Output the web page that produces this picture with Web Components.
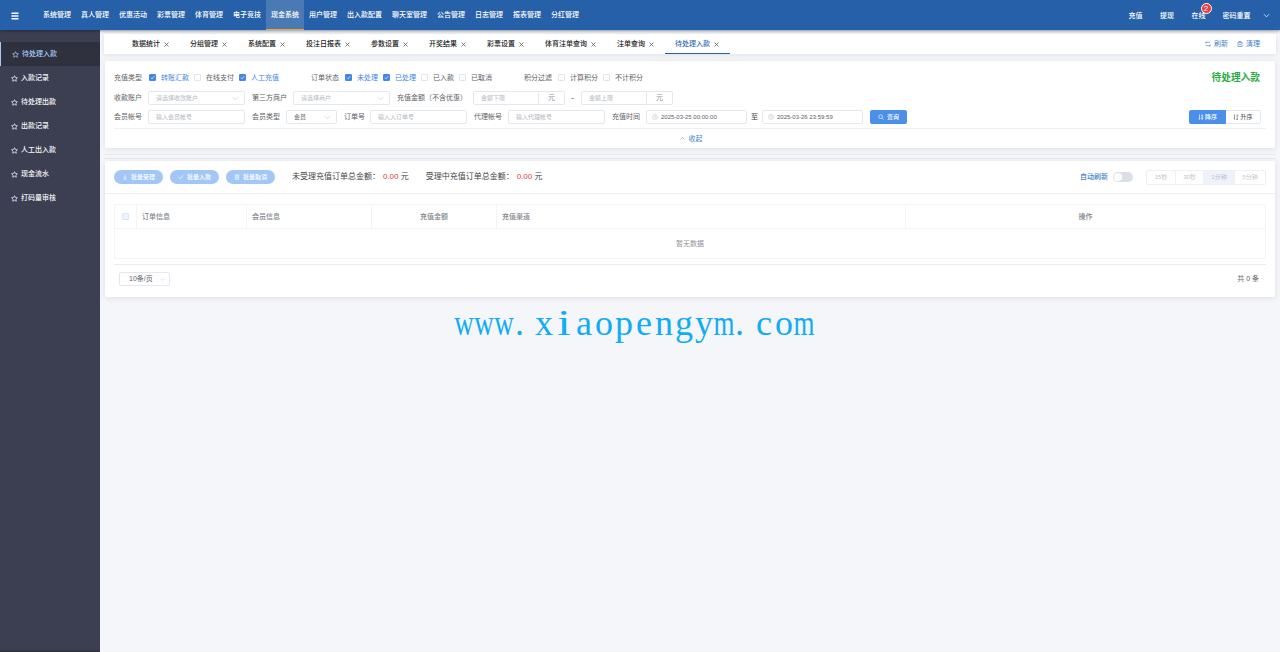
<!DOCTYPE html>
<html lang="zh-CN">
<head>
<meta charset="utf-8">
<title>待处理入款</title>
<style>
  html, body { margin: 0; height: 100%; }
  body {
    font-family: "Liberation Sans", "Noto Sans CJK SC", sans-serif;
    font-size: 7px;
    line-height: 10px;
    color: #606266;
    background: #f4f6fa;
    overflow: hidden;
  }
</style>
</head>
<body>
<admin-app></admin-app>

<script>
// ---------- icons ----------
const icons = {
  menu: '<path d="M1 2.500h14M1 8h14M1 13.500h14" stroke-width="2.600"/>',
  star: '<path d="M8 1.500l2 4.300 4.600.6-3.400 3.200.9 4.700L8 12l-4.100 2.300.9-4.700L1.400 6.400l4.600-.6z"/>',
  down: '<path d="M2 5l6 6 6-6"/>',
  up: '<path d="M2 11l6-6 6 6"/>',
  close: '<path d="M1.500 1.500l13 13M14.500 1.500l-13 13"/>',
  refresh: '<path d="M2 7V3.500h9.500a2 2 0 0 1 2 2M14 9v3.500H4.500a2 2 0 0 1-2-2M4 1.500l-2 2M12 14.500l2-2"/>',
  clear: '<path d="M2.500 3.500h11v11h-11zM5.500 3.500v-2h5v2M6 7l4 4M10 7l-4 4"/>',
  search: '<circle cx="7" cy="7" r="5"/><path d="M11 11l4 4"/>',
  clock: '<circle cx="8" cy="8" r="6.500"/><path d="M8 4v4.500h3"/>',
  check: '<path d="M2.500 8.500l4 4 7.500-9"/>',
  download: '<path d="M8 2v9M5 8.500l3 3 3-3M4 14h8"/>',
  trash: '<path d="M2 3.500h12M3.500 3.500v11h9v-11M6.500 6.500v5M9.500 6.500v5M6 1.500h4"/>',
  sortDesc: '<path d="M4 1v13.500M1.500 12L4 14.500 6.500 12M11 15V2M9 3.500h4M9 8h5M9 13h5"/>',
  sortAsc: '<path d="M4 1v13.500M1.500 12L4 14.500M11 15V1.500L13.500 4M8.500 14.500h5"/>'
};

// Small base class: subclasses only return their markup
class BaseElement extends HTMLElement {
  constructor() {
    super();
    this.attachShadow({ mode: "open" });
  }

  connectedCallback() {
    this.shadowRoot.innerHTML = this.render();
  }

  attr(name, fallback = "") {
    return this.getAttribute(name) || fallback;
  }
}

class UiIcon extends BaseElement {
  render() {
    return `
      <style>
        :host { display: inline-flex; flex: none; width: var(--size, 7px); height: var(--size, 7px); }
        svg { width: 100%; height: 100%; }
      </style>
      <svg viewBox="0 0 16 16" fill="none" stroke="currentColor" stroke-width="${this.attr("weight", "1.7")}">${icons[this.attr("name")]}</svg>`;
  }
}
customElements.define("ui-icon", UiIcon);

// ---------- header ----------
class NavItem extends BaseElement {
  render() {
    return `
      <style>
        :host { display: flex; align-items: center; padding: 0 5px; height: 30px; box-sizing: border-box; white-space: nowrap; font-weight: 500; }
        :host([active]) { background: #4a7ab4; border-bottom: 1px solid #eda43c; padding-top: 1px; }
      </style>
      <slot></slot>`;
  }
}
customElements.define("nav-item", NavItem);

class AppHeader extends BaseElement {
  render() {
    const menus = ["系统管理", "真人管理", "优惠活动", "彩票管理", "体育管理", "电子竞技", "现金系统",
      "用户管理", "出入款配置", "聊天室管理", "公告管理", "日志管理", "报表管理", "分红管理"];
    return `
      <style>
        :host { display: flex; align-items: center; height: 30px; background: #2560a8; color: #fff; box-shadow: 0 1px 3px rgba(0, 21, 41, .45); position: relative; z-index: 2; }
        .burger { display: flex; --size: 8px; padding: 1px 0 0 11px; width: 38px; box-sizing: border-box; }
        nav { display: flex; flex: 1; }
        .tools { display: flex; align-items: center; padding-right: 10px; padding-top: 1px; font-weight: 500; }
        .tools span { margin-right: 17.500px; }
        .tools .online { position: relative; margin-right: 17px; }
        .tools .reset { margin-right: 12.500px; }
        .badge { position: absolute; left: 9px; top: -8px; width: 11px; height: 11px; margin: 0; border: .5px solid #fff; box-sizing: border-box; border-radius: 50%; background: #ef3b3b; font: 8px/10px "Liberation Sans", sans-serif; text-align: center; }
      </style>
      <div class="burger"><ui-icon name="menu"></ui-icon></div>
      <nav>${menus.map(m => `<nav-item ${m === "现金系统" ? "active" : ""}>${m}</nav-item>`).join("")}</nav>
      <div class="tools">
        <span>充值</span><span>提现</span>
        <span class="online">在线<b class="badge">2</b></span>
        <span class="reset">密码重置</span>
        <ui-icon name="down"></ui-icon>
      </div>`;
  }
}
customElements.define("app-header", AppHeader);

// ---------- sidebar ----------
class SideItem extends BaseElement {
  render() {
    return `
      <style>
        :host { display: flex; align-items: center; gap: 3px; height: 24px; padding-left: 11px; font-weight: 500; --size: 7px; }
        :host([active]) { background: #2f313f; color: #a6cbf3; border-left: 1px solid #a6cbf3; }
      </style>
      <ui-icon name="star"></ui-icon><slot></slot>`;
  }
}
customElements.define("side-item", SideItem);

class SideMenu extends BaseElement {
  render() {
    const items = ["待处理入款", "入款记录", "待处理出款", "出款记录", "人工出入款", "现金流水", "打码量审核"];
    return `
      <style>
        :host { display: block; flex: none; width: 100px; box-sizing: border-box; padding-top: 12px; background: #3c3f51; color: #f5f6f8; border-bottom: 2px solid #333543; }
      </style>
      ${items.map((t, i) => `<side-item ${i === 0 ? "active" : ""}>${t}</side-item>`).join("")}`;
  }
}
customElements.define("side-menu", SideMenu);

// ---------- tabs ----------
class PageTabs extends BaseElement {
  render() {
    const tabs = ["数据统计", "分组管理", "系统配置", "投注日报表", "参数设置", "开奖结果", "彩票设置", "体育注单查询", "注单查询", "待处理入款"];
    return `
      <style>
        :host { display: flex; height: 20px; padding-left: 18px; background: #fff; color: #222; box-shadow: 0 1px 4px rgba(0, 21, 41, .1); }
        .tab { display: flex; align-items: center; gap: 3px; padding: 0 10px; height: 20px; box-sizing: border-box; white-space: nowrap; font-weight: 500; }
        .tab ui-icon { --size: 5px; margin: 0 1px; color: #444; }
        .active { color: #2f6fb8; border-bottom: 1px solid #2560a8; padding-top: 1px; }
        .tools { display: flex; align-items: center; margin-left: auto; margin-right: 16px; color: #4080cc; }
        .tools ui-icon { --size: 6px; margin-right: 3px; }
        .tools span + ui-icon { margin-left: 9px; }
      </style>
      ${tabs.map((t, i) => `<div class="tab ${i === 9 ? "active" : ""}">${t}<ui-icon name="close" weight="2.200"></ui-icon></div>`).join("")}
      <div class="tools">
        <ui-icon name="refresh"></ui-icon><span>刷新</span>
        <ui-icon name="clear"></ui-icon><span>清理</span>
      </div>`;
  }
}
customElements.define("page-tabs", PageTabs);

// ---------- form controls ----------
class FormField extends BaseElement {
  render() {
    return `
      <style>
        :host { display: flex; align-items: center; white-space: nowrap; }
        label { margin-right: var(--label-gap, 6px); }
      </style>
      <label>${this.attr("label")}</label><slot></slot>`;
  }
}
customElements.define("form-field", FormField);

class CheckBox extends BaseElement {
  render() {
    return `
      <style>
        :host { display: flex; align-items: center; margin-right: 5px; white-space: nowrap; }
        :host(:last-child) { margin-right: 0; }
        i { display: flex; width: 7px; height: 7px; margin-right: 5px; box-sizing: border-box; border: 1px solid #e1e4ea; border-radius: 1px; background: #fff; color: #fff; }
        ui-icon { --size: 5px; }
        :host([checked]) { color: #4088e2; }
        :host([checked]) i { background: #4088e2; border-color: #4088e2; }
      </style>
      <i>${this.hasAttribute("checked") ? '<ui-icon name="check" weight="2"></ui-icon>' : ""}</i><slot></slot>`;
  }
}
customElements.define("check-box", CheckBox);

class TextBox extends BaseElement {
  render() {
    const value = this.attr("value");
    return `
      <style>
        :host { display: flex; width: 97px; height: 14px; box-sizing: border-box; border: 1px solid #e4e7ed; border-radius: 2px; background: #fff; font-size: 6px; color: #606266; margin-right: -1px; }
        .inner { display: flex; flex: 1; align-items: center; padding: 0 5px 0 7px; }
        .hint { color: #b4b8c1; }
        .clock { --size: 6px; margin: 0 3px 0 -2px; color: #c0c4cc; }
        .down { --size: 7px; margin-left: auto; color: #c0c4cc; }
        .unit { display: flex; width: 25px; align-items: center; justify-content: center; border-left: 1px solid #e4e7ed; font-size: 7px; color: #909399; }
      </style>
      <div class="inner">
        ${this.hasAttribute("date") ? '<ui-icon class="clock" name="clock"></ui-icon>' : ""}
        <span class="${value ? "" : "hint"}">${value || this.attr("placeholder")}</span>
        ${this.hasAttribute("select") ? '<ui-icon class="down" name="down" weight="1.500"></ui-icon>' : ""}
      </div>
      ${this.hasAttribute("unit") ? `<div class="unit">${this.attr("unit")}</div>` : ""}`;
  }
}
customElements.define("text-box", TextBox);

class UiButton extends BaseElement {
  render() {
    return `
      <style>
        :host { display: flex; align-items: center; justify-content: center; gap: var(--icon-gap, 3px); height: 14px; box-sizing: border-box; border-radius: 2px; background: #4a8fe8; color: #fff; font-size: 6px; font-weight: 500; white-space: nowrap; --size: 6px; }
        :host([plain]) { background: #fff; color: #606266; border: 1px solid #e4e7ed; border-left: 0; }
        :host([round]) { width: 49px; border-radius: 7px; background: #a2c7f6; }
      </style>
      <ui-icon name="${this.attr("icon")}"></ui-icon><slot></slot>`;
  }
}
customElements.define("ui-button", UiButton);

class UiCard extends BaseElement {
  render() {
    return `
      <style>
        :host { display: block; box-sizing: border-box; background: #fff; border-radius: 2px; box-shadow: 0 1px 6px rgba(0, 0, 0, .1); margin: 0 1px; }
      </style>
      <slot></slot>`;
  }
}
customElements.define("ui-card", UiCard);

// ---------- search panel ----------
class SearchPanel extends BaseElement {
  render() {
    return `
      <style>
        :host { display: block; height: 87px; box-sizing: border-box; padding: 9px 9px 0; }
        .row { display: flex; align-items: center; gap: 8px; height: 14px; }
        .checks { gap: 32px; height: 15px; margin-bottom: 6px; }
        .checks form-field:first-child { --label-gap: 7px; }
        .amounts { margin-bottom: 5px; }
        .title { margin-left: auto; margin-right: 6px; font-size: 9.700px; line-height: 14px; font-weight: bold; color: #27ae3f; }
        .dash { width: 17px; text-align: center; margin: 0 -8px; font-size: 9px; }
        .to { margin: 0 -4px 0 -3px; color: #333; }
        .query { width: 37px; }
        .sort { display: flex; margin-left: auto; margin-right: 5px; --icon-gap: 1px; }
        .fold { display: flex; align-items: center; justify-content: center; gap: 4px; height: 19px; margin-top: 4px; padding-left: 2px; border-top: 1px solid #edeff3; color: #4080cc; --size: 5px; }
      </style>
      <div class="row checks">
        <form-field label="充值类型">
          <check-box checked>转账汇款</check-box><check-box>在线支付</check-box><check-box checked>人工充值</check-box>
        </form-field>
        <form-field label="订单状态">
          <check-box checked>未处理</check-box><check-box checked>已处理</check-box><check-box>已入款</check-box><check-box>已取消</check-box>
        </form-field>
        <form-field label="积分过滤"><check-box>计算积分</check-box><check-box>不计积分</check-box></form-field>
        <div class="title">待处理入款</div>
      </div>
      <div class="row amounts">
        <form-field label="收款账户"><text-box select placeholder="请选择收款账户"></text-box></form-field>
        <form-field label="第三方商户"><text-box select placeholder="请选择商户"></text-box></form-field>
        <form-field label="充值金额（不含优惠）"><text-box placeholder="金额下限" unit="元" style="width:92px"></text-box></form-field>
        <span class="dash">-</span>
        <text-box placeholder="金额上限" unit="元" style="width:92px"></text-box>
      </div>
      <div class="row">
        <form-field label="会员帐号"><text-box placeholder="输入会员帐号"></text-box></form-field>
        <form-field label="会员类型"><text-box select value="会员" style="width:51px"></text-box></form-field>
        <form-field label="订单号" style="--label-gap:5px"><text-box placeholder="输入入订单号"></text-box></form-field>
        <form-field label="代理帐号"><text-box placeholder="输入代理帐号"></text-box></form-field>
        <form-field label="充值时间"><text-box date value="2025-03-25 00:00:00" style="width:101px"></text-box></form-field>
        <span class="to">至</span>
        <text-box date value="2025-03-26 23:59:59" style="width:101px"></text-box>
        <ui-button class="query" icon="search">查询</ui-button>
        <div class="sort">
          <ui-button icon="sortDesc" style="width:37px;border-radius:2px 0 0 2px">降序</ui-button>
          <ui-button plain icon="sortAsc" style="width:35px;border-radius:0 2px 2px 0">升序</ui-button>
        </div>
      </div>
      <div class="fold"><ui-icon name="up"></ui-icon>收起</div>`;
  }
}
customElements.define("search-panel", SearchPanel);

// ---------- toolbar above the table ----------
class OrderToolbar extends BaseElement {
  render() {
    return `
      <style>
        :host { display: flex; align-items: center; height: 33px; box-sizing: border-box; padding: 0 9px; border-bottom: 1px solid #edeff3; }
        ui-button { margin-right: 7px; }
        .sum { font-size: 8px; line-height: 12px; margin: 0 0 0 10px; color: #444; white-space: nowrap; }
        .sum + .sum { margin-left: 17px; }
        .sum em { font-style: normal; color: #e03a3a; margin-left: .7px; }
        .auto { display: flex; align-items: center; margin-left: auto; color: #4080cc; font-weight: 500; }
        .switch { width: 20px; height: 10px; margin: 0 13px 0 5px; box-sizing: border-box; padding: 1px; border-radius: 5px; background: #dcdfe6; }
        .switch::before { content: ""; display: block; width: 8px; height: 8px; border-radius: 50%; background: #fff; }
        .times { display: flex; font-size: 6px; font-weight: 400; color: #c0c4cc; border: 1px solid #eef0f5; border-right: 0; border-radius: 2px; }
        .times span { width: 28px; height: 13px; line-height: 13px; text-align: center; border-right: 1px solid #eef0f5; }
        .times span:nth-child(2) { width: 27px; }
        .times span:nth-child(n+3) { width: 30px; }
        .times .on { background: #eff2fb; color: #b8bfcf; }
      </style>
      <ui-button round icon="download">批量受理</ui-button>
      <ui-button round icon="check">批量入款</ui-button>
      <ui-button round icon="trash">批量取消</ui-button>
      <div class="sum">未受理充值订单总金额： <em>0.00</em> 元</div>
      <div class="sum">受理中充值订单总金额： <em>0.00</em> 元</div>
      <div class="auto">自动刷新<div class="switch"></div>
        <div class="times"><span>15秒</span><span>30秒</span><span class="on">1分钟</span><span>5分钟</span></div>
      </div>`;
  }
}
customElements.define("order-toolbar", OrderToolbar);

class OrderTable extends BaseElement {
  render() {
    return `
      <style>
        :host { display: block; margin: 10px 9px 0; border: 1px solid #f1f3f7; color: #808389; font-weight: 500; }
        .head { display: grid; grid-template-columns: 22px 110px 125px 125px 409px 1fr; height: 24px; box-sizing: border-box; border-bottom: 1px solid #f1f3f7; }
        .head div { display: flex; align-items: center; padding-left: 5px; border-right: 1px solid #f1f3f7; }
        .head div:last-child { border-right: 0; }
        .head .center { justify-content: center; padding: 0; }
        .box { width: 5px; height: 5px; border: 1px solid #dfe5f0; border-radius: 1px; background: #edf2fc; }
        .empty { height: 29px; line-height: 30px; text-align: center; font-weight: 400; color: #909399; }
      </style>
      <div class="head">
        <div class="center"><span class="box"></span></div>
        <div>订单信息</div><div>会员信息</div><div class="center">充值金额</div><div>充值渠道</div><div class="center">操作</div>
      </div>
      <div class="empty">暂无数据</div>`;
  }
}
customElements.define("order-table", OrderTable);

class PageFooter extends BaseElement {
  render() {
    return `
      <style>
        :host { display: flex; align-items: center; justify-content: space-between; height: 32px; box-sizing: border-box; margin: 5px 9px 0; padding: 0 7px 3px 5px; border-top: 1px solid #e8ebf0; }
        .size { display: flex; align-items: center; width: 51px; height: 14px; box-sizing: border-box; padding: 0 4px 0 9px; border: 1px solid #e4e7ed; border-radius: 2px; }
        .size ui-icon { --size: 5px; margin-left: auto; color: #c0c4cc; }
      </style>
      <div class="size">10条/页<ui-icon name="down"></ui-icon></div>
      <span>共 0 条</span>`;
  }
}
customElements.define("page-footer", PageFooter);

class SiteMark extends BaseElement {
  render() {
    const kinds = { w: "wide", m: "wide", i: "thin", ".": "dot" };
    const cells = [...this.textContent].map(c => `<span class="${kinds[c] || ""}">${c}</span>`).join("");
    return `
      <style>
        :host { display: flex; width: 360px; font: 36px/44px "Liberation Serif", serif; color: #12acf2; }
        span { display: flex; justify-content: center; width: 20px; }
        .wide { transform: scaleX(.75); }
        .thin { transform: scaleX(1.350); }
        .dot { justify-content: flex-start; text-indent: 1px; }
      </style>${cells}`;
  }
}
customElements.define("site-mark", SiteMark);

class AdminApp extends BaseElement {
  render() {
    return `
      <style>
        :host { display: flex; flex-direction: column; height: 652px; }
        .body { display: flex; flex: 1; }
        main { flex: 1; min-width: 0; padding: 4px 4px 0; }
        .search { margin-top: 7px; }
        .strip { height: 3px; margin: 6px 0 2px; border: 1px solid #e6e8ed; border-width: 1px 0; }
        .list { height: 136px; }
        site-mark { margin: 4px 0 0 350px; }
      </style>
      <app-header></app-header>
      <div class="body">
        <side-menu></side-menu>
        <main>
          <page-tabs></page-tabs>
          <ui-card class="search"><search-panel></search-panel></ui-card>
          <div class="strip"></div>
          <ui-card class="list">
            <order-toolbar></order-toolbar>
            <order-table></order-table>
            <page-footer></page-footer>
          </ui-card>
          <site-mark>www.xiaopengym.com</site-mark>
        </main>
      </div>`;
  }
}
customElements.define("admin-app", AdminApp);
</script>
</body>
</html>
